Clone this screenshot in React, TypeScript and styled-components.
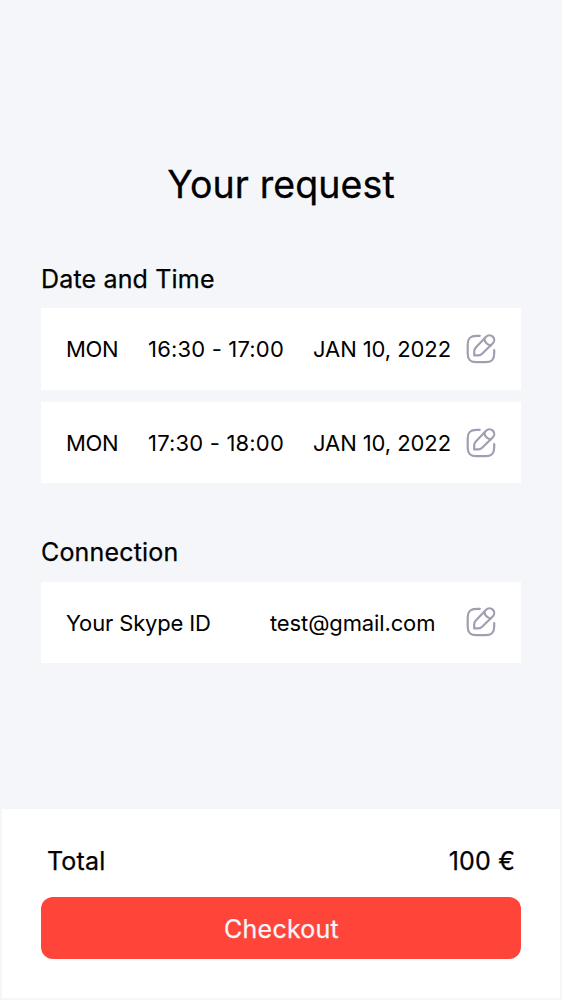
import React from "react";
import styled, { createGlobalStyle } from "styled-components";

const GlobalStyle = createGlobalStyle`
  * { box-sizing: border-box; }
  body {
    margin: 0;
    background: #f4f6fa;
    color: #000;
    font-family: Inter, "Liberation Sans", sans-serif;
  }
`;

const Screen = styled.main`
  display: flex;
  flex-direction: column;
  min-height: 1000px;
  padding: 161px 2px 2px;
`;

const Title = styled.h1`
  margin: 0;
  font-size: 37.5px;
  font-weight: 400;
  letter-spacing: 0.1px;
  line-height: 48px;
  text-align: center;
  -webkit-text-stroke: 0.3px currentColor;
`;

const Section = styled.section<{ $top: number }>`
  margin: ${(p) => p.$top}px 39px 0;
`;

const Heading = styled.h2<{ $gap: number }>`
  margin: 0 0 ${(p) => p.$gap}px;
  font-size: 25px;
  font-weight: 400;
  letter-spacing: 0.17px;
  line-height: 32px;
  -webkit-text-stroke: 0.25px currentColor;
`;

const Cards = styled.div`
  display: flex;
  flex-direction: column;
  gap: 12px;
`;

const Card = styled.div<{ $columns: string; $height?: number }>`
  display: grid;
  grid-template-columns: ${(p) => p.$columns};
  align-items: center;
  height: ${(p) => p.$height ?? 81}px;
  padding: 0 25px;
  background: #fff;
  font-size: 22px;
  font-weight: 400;
  white-space: nowrap;
`;

const Value = styled.span<{ $tracking?: number }>`
  letter-spacing: ${(p) => p.$tracking ?? 0}px;
`;

const EditButton = styled.button<{ $lift?: number }>`
  display: flex;
  width: 30px;
  height: 30px;
  margin: 0 0 ${(p) => p.$lift ?? 0}px;
  padding: 0;
  border: 0;
  background: none;
  color: #a09eb3;
`;

const Footer = styled.footer`
  display: flex;
  flex-direction: column;
  height: 189px;
  margin-top: auto;
  padding: 36px 39px 0;
  background: #fff;
`;

const Total = styled.div`
  display: flex;
  justify-content: space-between;
  padding: 0 6px;
  font-size: 25px;
  font-weight: 400;
  letter-spacing: 0.17px;
  line-height: 32px;
  -webkit-text-stroke: 0.25px currentColor;
`;

const Checkout = styled.button`
  height: 62px;
  margin-top: 20px;
  padding: 2px 0 0 1px;
  border: 0;
  border-radius: 12px;
  background: #ff4539;
  color: #f4f6fa;
  font: 400 25px/32px Inter, "Liberation Sans", sans-serif;
  letter-spacing: 0.22px;
  -webkit-text-stroke: 0.25px currentColor;
`;

const Edit = ({ lift }: { lift?: number }) => (
  <EditButton aria-label="Edit" $lift={lift}>
    <svg width="30" height="30" viewBox="0 0 30 30" fill="none" stroke="currentColor" strokeWidth="2.2" strokeLinecap="round" strokeLinejoin="round">
      <path d="M13.8 1.8H10.5C4.2 1.8 1.7 4.3 1.7 10.5V19.5C1.7 25.7 4.2 28.2 10.5 28.2H19.5C25.7 28.2 28.2 25.7 28.2 19.5V16" />
      <path d="M20.1 2.8 9.8 13.4C8.7 14.6 8.2 15.8 8.2 17.4V21.4H12.2C13.8 21.4 15 20.9 16.1 19.8L26.9 9.3A4.7 4.7 0 0 0 20.1 2.8Z" />
      <path d="M18.4 5.2C18.9 8.4 21.3 10.8 24.8 11.4" />
    </svg>
  </EditButton>
);

const slots = [
  { day: "MON", time: "16:30 - 17:00", date: "JAN 10, 2022", height: 82 },
  { day: "MON", time: "17:30 - 18:00", date: "JAN 10, 2022", height: 81 },
];

export default function App() {
  return (
    <>
      <GlobalStyle />
      <Screen>
        <Title>Your request</Title>
        <Section $top={54}>
          <Heading $gap={13}>Date and Time</Heading>
          <Cards>
            {slots.map((slot) => (
              <Card key={slot.time} $columns="82px 165px 153px 30px" $height={slot.height}>
                <Value $tracking={-0.4}>{slot.day}</Value>
                <Value $tracking={0.18}>{slot.time}</Value>
                <Value $tracking={-0.08}>{slot.date}</Value>
                <Edit />
              </Card>
            ))}
          </Cards>
        </Section>
        <Section $top={53}>
          <Heading $gap={14}>Connection</Heading>
          <Card $columns="204px 196px 30px">
            <Value $tracking={-0.15}>Your Skype ID</Value>
            <Value $tracking={-0.12}>test@gmail.com</Value>
            <Edit lift={1} />
          </Card>
        </Section>
        <Footer>
          <Total>
            <span>Total</span>
            <span>100 €</span>
          </Total>
          <Checkout>Checkout</Checkout>
        </Footer>
      </Screen>
    </>
  );
}
